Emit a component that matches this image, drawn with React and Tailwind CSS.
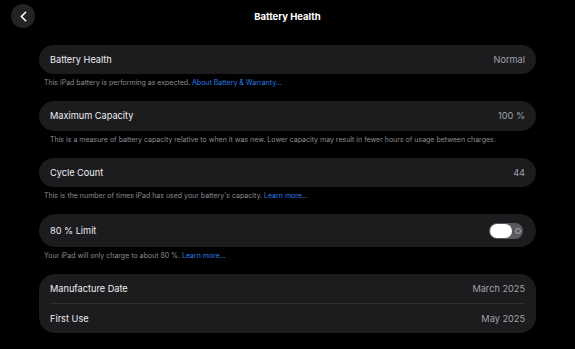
import { ChevronLeft } from 'lucide-react';

function Footnote({ children, className = '' }) {
  return (
    <p className={`mt-[5px] mb-[14px] pl-[5px] text-[7px] leading-[8px] text-[#8d8d92] ${className}`}>
      {children}
    </p>
  );
}

function Link({ children }) {
  return <span className="text-[#2d7ee6]">{children}</span>;
}

function Row({ label, value, className = '' }) {
  return (
    <div className={`flex items-center justify-between px-[11px] ${className}`}>
      <span className="text-[9.2px] text-[#ededf2]">{label}</span>
      <span className="text-[9.2px] text-[#a1a1a6]">{value}</span>
    </div>
  );
}

function Toggle() {
  return (
    <div className="relative flex h-[16px] w-[34px] items-center rounded-full bg-[#5b5b5f] px-[1px]">
      <div className="h-[14px] w-[22px] rounded-full bg-white" />
      <div className="ml-[3px] h-[6px] w-[6px] rounded-full border border-[#a8a8ac]" />
    </div>
  );
}

export default function App() {
  return (
    <div
      className="h-[349px] w-[575px] overflow-hidden bg-black"
      style={{ fontFamily: 'Inter, "Noto Sans", sans-serif' }}
    >
      {/* Header */}
      <div className="relative flex h-[45px] items-start justify-center pt-[10px]">
        <button className="absolute left-[11px] top-[4px] flex h-[24px] w-[24px] items-center justify-center rounded-full bg-[#232325] text-white">
          <ChevronLeft className="h-[17px] w-[17px]" strokeWidth={2.3} />
        </button>
        <h1 className="text-[9.5px] font-bold text-white">Battery Health</h1>
      </div>

      <div className="px-[39px]">
        <Row label="Battery Health" value="Normal" className="h-[29px] rounded-full bg-[#1c1c1e]" />
        <Footnote>
          This iPad battery is performing as expected. <Link>About Battery &amp; Warranty...</Link>
        </Footnote>

        <Row label="Maximum Capacity" value="100 %" className="h-[30px] rounded-full bg-[#1c1c1e]" />
        <Footnote className="pl-[11px]">
          This is a measure of battery capacity relative to when it was new. Lower capacity may result in fewer hours of usage between charges.
        </Footnote>

        <Row label="Cycle Count" value="44" className="h-[29px] rounded-full bg-[#1c1c1e]" />
        <Footnote>
          This is the number of times iPad has used your battery's capacity. <Link>Learn more...</Link>
        </Footnote>

        <div className="flex h-[33px] items-center justify-between rounded-full bg-[#1c1c1e] pl-[11px] pr-[13px]">
          <span className="text-[9.2px] text-[#ededf2]">80 % Limit</span>
          <Toggle />
        </div>
        <Footnote>
          Your iPad will only charge to about 80 %. <Link>Learn more...</Link>
        </Footnote>

        <div className="rounded-[16px] bg-[#1c1c1e]">
          <Row label="Manufacture Date" value="March 2025" className="h-[29px]" />
          <div className="mx-[11px] h-px bg-[#2e2e31]" />
          <Row label="First Use" value="May 2025" className="h-[29px]" />
        </div>
      </div>
    </div>
  );
}
